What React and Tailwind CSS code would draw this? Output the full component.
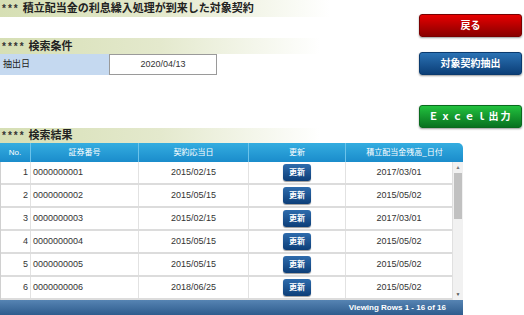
const rows = [
  { no: 1, code: '0000000001', date: '2015/02/15', rest: '2017/03/01' },
  { no: 2, code: '0000000002', date: '2015/05/15', rest: '2015/05/02' },
  { no: 3, code: '0000000003', date: '2015/02/15', rest: '2017/03/01' },
  { no: 4, code: '0000000004', date: '2015/05/15', rest: '2015/05/02' },
  { no: 5, code: '0000000005', date: '2015/05/15', rest: '2015/05/02' },
  { no: 6, code: '0000000006', date: '2018/06/25', rest: '2015/05/02' },
];

const font = { fontFamily: '"Liberation Sans", "Noto Sans CJK JP", sans-serif' };

function SectionBar({ stars, title, className = '' }) {
  return (
    <div className={`w-[320px] flex items-center bg-gradient-to-r from-[#d6dfb4] via-[#e4e9cd] to-white ${className}`}>
      <span className="text-[10px] font-bold text-[#333] tracking-[2px] pl-[2px]">{stars}</span>
      <span className="text-[11px] font-bold text-[#222] ml-[3px]">{title}</span>
    </div>
  );
}

function ActionButton({ color, children, className = '' }) {
  const tones = {
    red: 'bg-gradient-to-b from-[#e60000] to-[#8a0000] border-[#7a0000]',
    blue: 'bg-gradient-to-b from-[#2b72b4] to-[#0b3f78] border-[#0a3a6e]',
    green: 'bg-gradient-to-b from-[#22c23e] to-[#087220] border-[#0a6a1e]',
  };
  return (
    <button className={`w-[103px] h-[23px] rounded-[3px] border text-white text-[10px] font-bold flex items-center justify-center shadow-[0_1px_2px_rgba(0,0,0,0.4)] ${tones[color]} ${className}`}>
      {children}
    </button>
  );
}

export default function App() {
  return (
    <div className="w-[524px] h-[315px] bg-white overflow-hidden relative" style={font}>
      <div className="flex">
        {/* left column */}
        <div className="flex-1">
          <div className="h-[17px] w-[330px] flex items-center bg-gradient-to-r from-[#d6dfb4] via-[#e4e9cd] to-white">
            <span className="text-[10px] font-bold text-[#333] tracking-[2px] pl-[2px]">***</span>
            <span className="text-[11px] font-bold text-[#222] ml-[3px]">積立配当金の利息繰入処理が到来した対象契約</span>
          </div>
          <SectionBar stars="****" title="検索条件" className="h-[16px] mt-[21px]" />
          <div className="flex h-[21px]">
            <div className="w-[109px] bg-[#c5d9f0] text-[9px] text-[#222] flex items-center pl-[3px]">抽出日</div>
            <div className="w-[108px] border border-[#9a9a9a] bg-white text-[9px] text-[#333] flex items-center justify-center">2020/04/13</div>
          </div>
        </div>
        {/* right buttons */}
        <div className="w-[105px] pt-[14px] flex flex-col">
          <ActionButton color="red">戻る</ActionButton>
          <ActionButton color="blue" className="mt-[15px]">対象契約抽出</ActionButton>
          <ActionButton color="green" className="mt-[30px] tracking-[2px]">Ｅｘｃｅｌ出力</ActionButton>
        </div>
      </div>

      <SectionBar stars="****" title="検索結果" className="h-[15px] absolute left-0 top-[128px]" />

      {/* grid */}
      <div className="absolute left-0 top-[143px] w-[463px]">
        <div className="flex h-[19px] bg-gradient-to-b from-[#34ade0] to-[#1a8ccb] rounded-tr-[5px] text-white text-[8px]">
          <div className="w-[31px] flex items-center justify-center border-r border-[#6cc3ea]">No.</div>
          <div className="w-[108px] flex items-center justify-center border-r border-[#6cc3ea]">証券番号</div>
          <div className="w-[110px] flex items-center justify-center border-r border-[#6cc3ea]">契約応当日</div>
          <div className="w-[97px] flex items-center justify-center border-r border-[#6cc3ea]">更新</div>
          <div className="flex-1 flex items-center justify-center">積立配当金残高_日付</div>
        </div>
        <div className="flex h-[138px] overflow-hidden border-l border-[#d0d0d0]">
          <div className="w-[452px]">
            {rows.map((r) => (
              <div key={r.no} className="flex h-[23px] border-b-2 border-[#dcdcdc] text-[9px] text-[#333]">
                <div className="w-[30px] flex items-center justify-end pr-[2px] border-r border-[#e2e2e2]">{r.no}</div>
                <div className="w-[108px] flex items-center pl-[2px] border-r border-[#e2e2e2]">{r.code}</div>
                <div className="w-[110px] flex items-center justify-center border-r border-[#e2e2e2]">{r.date}</div>
                <div className="w-[97px] flex items-center justify-center border-r border-[#e2e2e2]">
                  <span className="w-[28px] h-[17px] rounded-[3px] bg-gradient-to-b from-[#2e6cad] to-[#0c3e78] text-white text-[8px] font-bold flex items-center justify-center shadow-[0_1px_1px_rgba(0,0,0,0.4)]">更新</span>
                </div>
                <div className="flex-1 flex items-center justify-center">{r.rest}</div>
              </div>
            ))}
          </div>
          <div className="w-[11px] bg-[#f1f1f1] border-l border-[#e0e0e0] flex flex-col items-center">
            <span className="text-[5px] text-[#777] h-[11px] leading-[11px]">▲</span>
            <div className="w-[8px] h-[46px] bg-[#c1c1c1]"></div>
            <div className="flex-1"></div>
            <span className="text-[5px] text-[#555] h-[11px] leading-[11px]">▼</span>
          </div>
        </div>
      </div>

      <div className="absolute left-0 top-[300px] w-[463px] h-[15px] bg-gradient-to-b from-[#5684b3] to-[#2e5c8d] flex items-center justify-end pr-[17px]">
        <span className="text-white text-[8px] font-bold">Viewing Rows 1 - 16 of 16</span>
      </div>
    </div>
  );
}
